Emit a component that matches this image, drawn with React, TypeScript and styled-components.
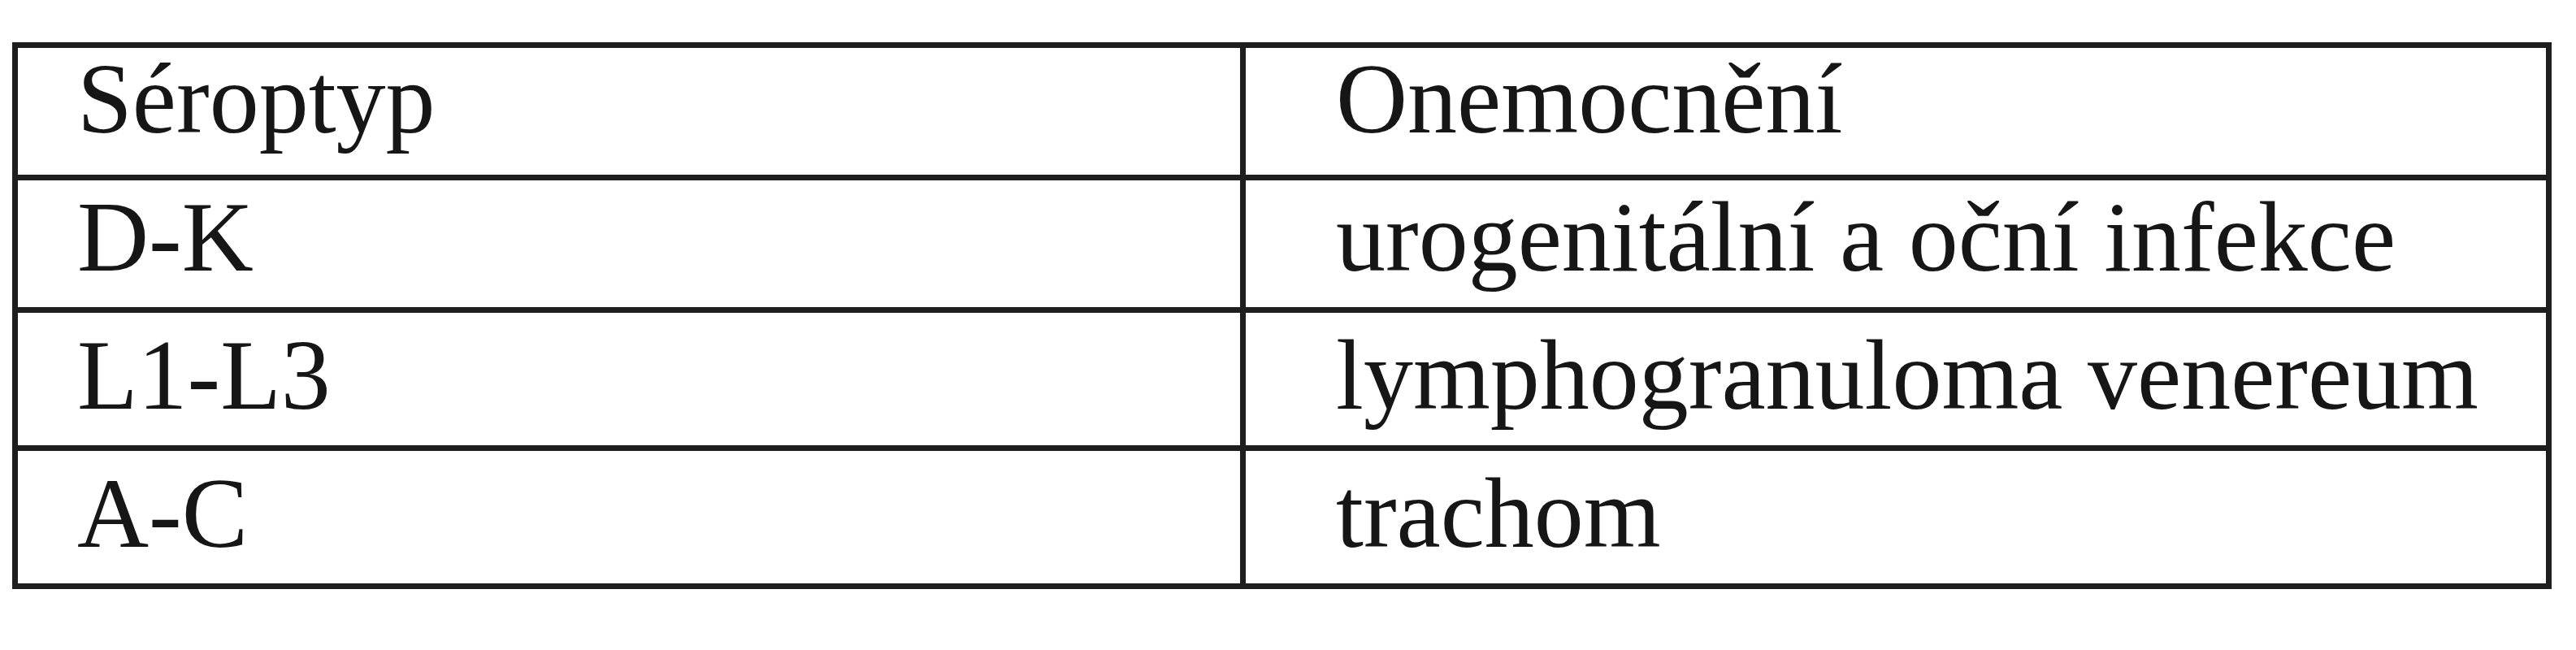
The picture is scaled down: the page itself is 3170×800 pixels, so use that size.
import styled, { createGlobalStyle } from "styled-components";

const GlobalStyle = createGlobalStyle`
  html, body {
    margin: 0;
    padding: 0;
    background: #ffffff;
  }
`;

const Page = styled.div`
  padding: 52px 0 0 15px;
  font-family: "Liberation Serif", "Times New Roman", serif;
  color: #161616;
`;

const Table = styled.div`
  box-sizing: border-box;
  width: 3125px;
  border: 7px solid #1e1e1e;
  display: flex;
  flex-direction: column;
`;

const Row = styled.div<{ $height: number; $first?: boolean }>`
  display: grid;
  grid-template-columns: 1504px 1fr;
  height: ${(p) => p.$height}px;
  box-sizing: content-box;
  border-top: ${(p) => (p.$first ? "none" : "7px solid #1e1e1e")};
`;

const Cell = styled.div<{ $pad: number; $bottom: number; $divider?: boolean; $last?: boolean }>`
  position: relative;
  display: flex;
  align-items: flex-end;
  padding-left: ${(p) => p.$pad}px;
  padding-bottom: ${(p) => p.$bottom}px;
  border-left: ${(p) => (p.$divider ? "7px solid #1e1e1e" : "none")};
  font-size: 122px;
  line-height: 1;
  white-space: nowrap;

  ${(p) =>
    p.$last
      ? `&::after {
    content: "";
    position: absolute;
    left: -7px;
    bottom: -14px;
    width: 7px;
    height: 7px;
    background: #1e1e1e;
  }`
      : ""}
`;

const rows = [
  { a: "Séroptyp", b: "Onemocnění", h: 156, pb: 32 },
  { a: "D-K", b: "urogenitální a oční infekce", h: 156, pb: 25 },
  { a: "L1-L3", b: "lymphogranuloma venereum", h: 163, pb: 25 },
  { a: "A-C", b: "trachom", h: 163, pb: 25 },
];

export default function App() {
  return (
    <>
      <GlobalStyle />
      <Page>
        <Table>
          {rows.map((r, i) => (
            <Row key={r.a} $height={r.h} $first={i === 0}>
              <Cell $pad={73} $bottom={r.pb}>
                {r.a}
              </Cell>
              <Cell $pad={111} $bottom={r.pb} $divider $last={i === rows.length - 1}>
                {r.b}
              </Cell>
            </Row>
          ))}
        </Table>
      </Page>
    </>
  );
}
